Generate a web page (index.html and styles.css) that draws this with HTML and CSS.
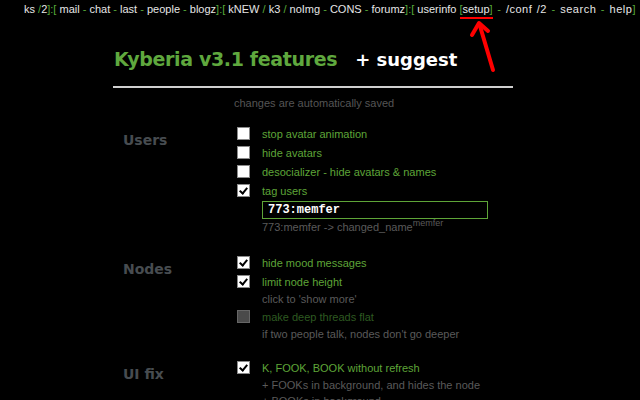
FILE: index.html
```html
<!DOCTYPE html>
<html>
<head>
<meta charset="utf-8">
<link rel="stylesheet" href="styles.css">
</head>
<body>
<div class="topbar">
  <span class="w">ks</span> <span class="g">/</span><span class="w">2</span><span class="g">]:[</span> <span class="w">mail</span> <span class="g">-</span> <span class="w">chat</span> <span class="g">-</span> <span class="w">last</span> <span class="g">-</span> <span class="w">people</span> <span class="g">-</span> <span class="w">blogz</span><span class="g">]:[</span> <span class="w">kNEW</span> <span class="g">/</span> <span class="w">k3</span> <span class="g">/</span> <span class="w">noImg</span> <span class="g">-</span> <span class="w">CONS</span> <span class="g">-</span> <span class="w">forumz</span><span class="g">]:[</span> <span class="w">userinfo</span> <span class="mark"><span class="g">[</span><span class="w">setup</span><span class="g">]</span></span><span class="tail"> <span class="g">-</span> <span class="w">/conf /2</span> <span class="g">-</span> <span class="w">search</span> <span class="g">-</span> <span class="w">help</span><span class="g">]</span></span>
</div>
<svg class="arrow" width="40" height="60" viewBox="0 0 40 60">
  <path d="M24 52 L11 8" stroke="#f00" stroke-width="4" stroke-linecap="round" fill="none"/>
  <path d="M3 17 L10 5 L19 13" stroke="#f00" stroke-width="4" stroke-linecap="round" stroke-linejoin="round" fill="none"/>
</svg>
<div class="page">
  <div class="title">
    <h1>Kyberia v3.1 features</h1>
    <span class="suggest">+ suggest</span>
  </div>
  <div class="rule"></div>
  <div class="saved">changes are automatically saved</div>

  <div class="section">
    <div class="label">Users</div>
    <div class="opts">
      <div class="row"><span class="cb"></span><span class="txt">stop avatar animation</span></div>
      <div class="row"><span class="cb"></span><span class="txt">hide avatars</span></div>
      <div class="row"><span class="cb"></span><span class="txt">desocializer - hide avatars &amp; names</span></div>
      <div class="row"><span class="cb on"></span><span class="txt">tag users</span></div>
      <div class="field">773:memfer</div>
      <div class="hint">773:memfer -&gt; changed_name<sup>memfer</sup></div>
    </div>
  </div>

  <div class="section">
    <div class="label">Nodes</div>
    <div class="opts">
      <div class="row"><span class="cb on"></span><span class="txt">hide mood messages</span></div>
      <div class="row"><span class="cb on"></span><span class="txt">limit node height</span></div>
      <div class="hint">click to 'show more'</div>
      <div class="row dis"><span class="cb"></span><span class="txt">make deep threads flat</span></div>
      <div class="hint">if two people talk, nodes don't go deeper</div>
    </div>
  </div>

  <div class="section last">
    <div class="label">UI fix</div>
    <div class="opts">
      <div class="row"><span class="cb on"></span><span class="txt">K, FOOK, BOOK without refresh</span></div>
      <div class="hint">+ FOOKs in background, and hides the node</div>
      <div class="hint">+ BOOKs in background</div>
    </div>
  </div>
</div>
</body>
</html>
```
FILE: styles.css
```css
html, body {
  margin: 0;
  padding: 0;
  background: #000;
  overflow: hidden;
  height: 400px;
}
body {
  font-family: "Liberation Sans", Arial, sans-serif;
  font-size: 11px;
  color: #5e9e36;
  position: relative;
}
.topbar {
  height: 19px;
  line-height: 18px;
  padding-left: 24px;
  white-space: nowrap;
  font-size: 11px;
}
.tail {
  letter-spacing: 0.5px;
  word-spacing: 1px;
}
.w { color: #e6e6e6; }
.g { color: #57a83a; }
.mark {
  display: inline-block;
  border-bottom: 2px solid #ff0000;
  line-height: 15px;
}
.arrow {
  position: absolute;
  left: 469px;
  top: 18px;
}
.page {
  margin-left: 113px;
  width: 400px;
}
.title {
  display: flex;
  align-items: baseline;
  gap: 18px;
  padding-top: 29px;
  height: 53px;
  box-sizing: border-box;
  padding-left: 1px;
}
h1 {
  margin: 0;
  font-family: "DejaVu Sans", Verdana, sans-serif;
  font-size: 19px;
  font-weight: bold;
  color: #5fa83e;
  letter-spacing: -0.35px;
}
.suggest {
  font-family: "DejaVu Sans", Verdana, sans-serif;
  font-size: 18px;
  font-weight: bold;
  color: #fff;
}
.rule {
  height: 2px;
  background: #cfcfcf;
  margin-top: 14px;
}
.saved {
  margin-top: 8px;
  padding-left: 121px;
  color: #555;
  line-height: 14px;
}
.section {
  display: grid;
  grid-template-columns: 124px 1fr;
  margin-top: 14px;
}
.section + .section { margin-top: 18px; }
.section.last { margin-top: 16px; }
.label {
  padding-left: 10px;
  padding-top: 6px;
  font-family: "DejaVu Sans", Verdana, sans-serif;
  font-size: 14px;
  font-weight: bold;
  color: #474c50;
  line-height: 20px;
}
.row {
  display: flex;
  align-items: center;
  height: 19px;
}
.cb {
  width: 11px;
  height: 11px;
  background: #fff;
  border: 1px solid #8a8a8a;
  margin-right: 12px;
  position: relative;
  flex: none;
}
.cb.on::after {
  content: "";
  position: absolute;
  left: 3px;
  top: 1px;
  width: 3px;
  height: 6px;
  border: solid #000;
  border-width: 0 2px 2px 0;
  transform: rotate(40deg);
}
.txt { color: #5ea538; font-size: 11px; }
.dis .cb { background: #4a4a4a; border-color: #666; }
.dis .txt { color: #2e5a20; }
.field {
  margin-left: 25px;
  margin-top: 1px;
  width: 226px;
  height: 18px;
  box-sizing: border-box;
  border: 1px solid #5ea538;
  font-family: "Liberation Mono", "Courier New", monospace;
  font-weight: bold;
  font-size: 12px;
  color: #fff;
  line-height: 16px;
  padding-left: 5px;
}
.hint {
  margin-left: 25px;
  color: #5a5a5a;
  line-height: 16px;
  font-size: 11px;
}
.hint sup {
  font-size: 9px;
  vertical-align: 5px;
  line-height: 0;
}
```
